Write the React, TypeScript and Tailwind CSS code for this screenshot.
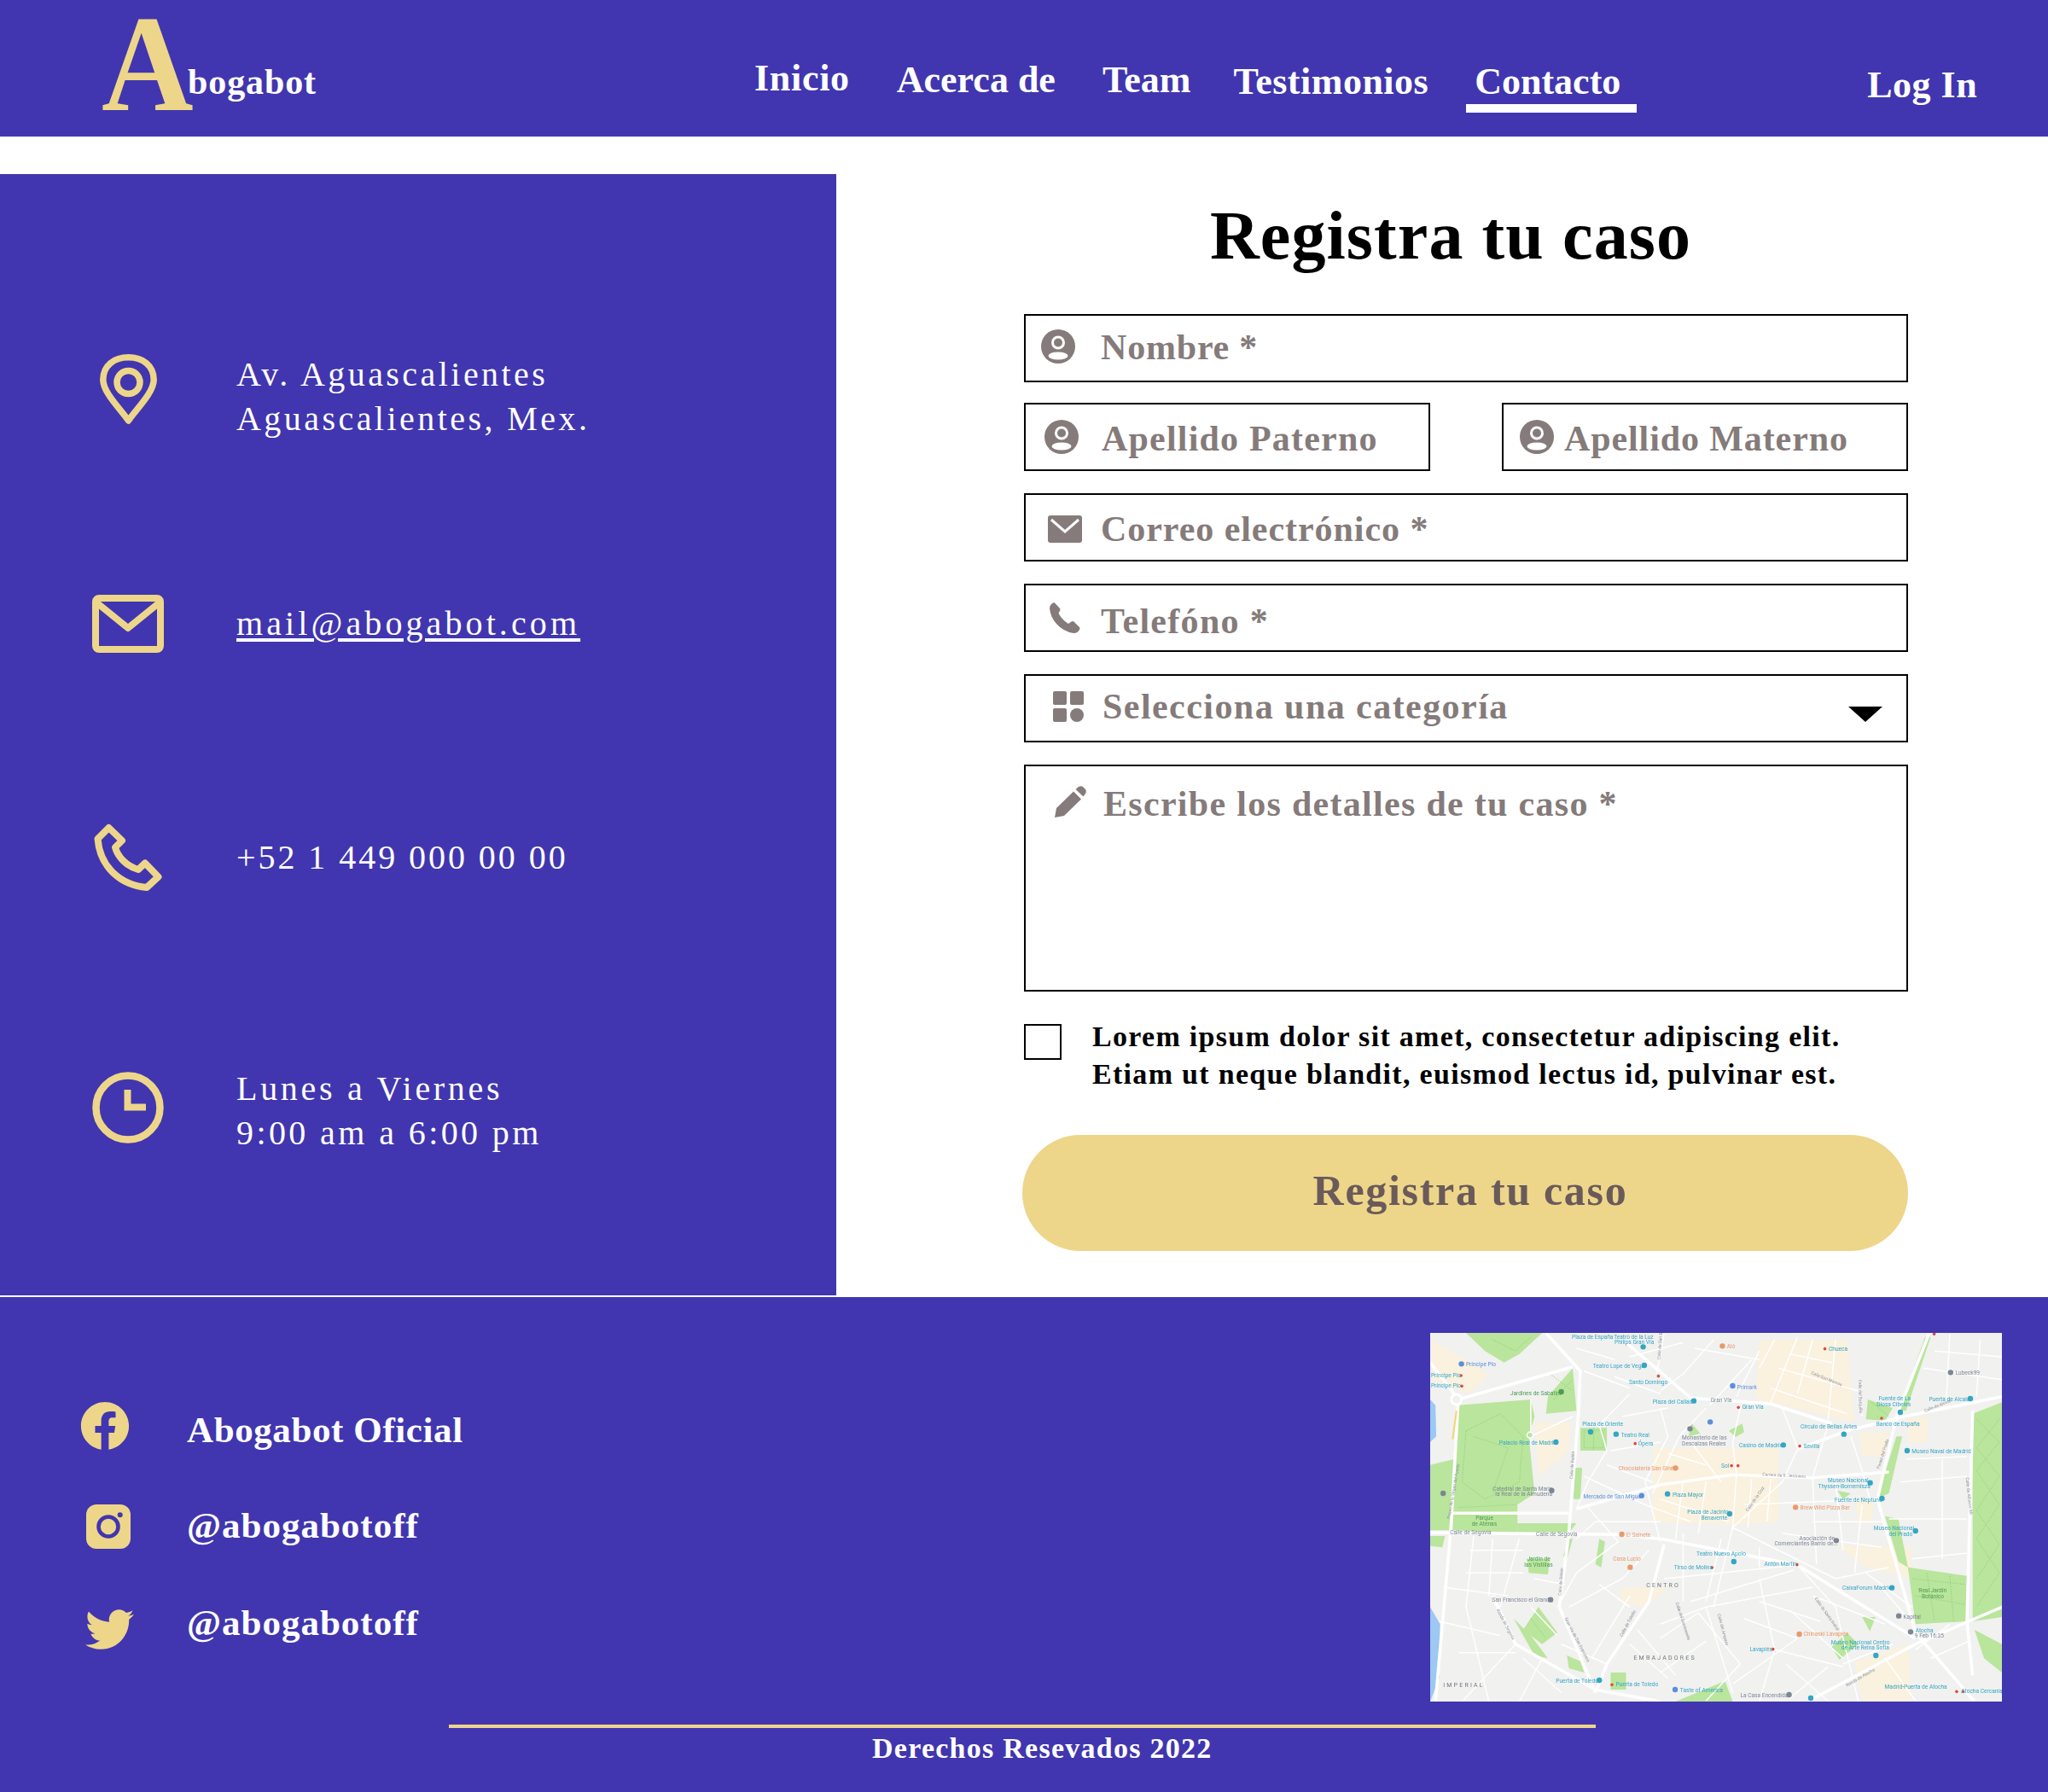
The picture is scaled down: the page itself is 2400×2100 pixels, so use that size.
import { FaFacebook, FaTwitter } from 'react-icons/fa';

const GOLD = '#EDD68A';
const PURPLE = '#4136AF';
const GRAY = '#857B7A';

function UserIcon() {
  return (
    <svg width="40" height="40" viewBox="0 0 40 40">
      <circle cx="20" cy="20" r="20" fill={GRAY} />
      <circle cx="20" cy="15.5" r="6.5" fill={GRAY} stroke="#fff" strokeWidth="3" />
      <ellipse cx="20" cy="31" rx="11.5" ry="4.5" fill="#fff" />
    </svg>
  );
}

function PinIcon() {
  return (
    <svg width="67" height="83" viewBox="0 0 67 83" fill="none" stroke={GOLD} strokeWidth="7.5" strokeLinejoin="round">
      <path d="M33.5 78 C24 64 3.8 45 3.8 30 C3.8 13 17 3.8 33.5 3.8 C50 3.8 63.2 13 63.2 30 C63.2 45 43 64 33.5 78Z" />
      <circle cx="33.5" cy="33" r="13.5" />
    </svg>
  );
}

function MailIcon() {
  return (
    <svg width="84" height="68" viewBox="0 0 84 68" fill="none" stroke={GOLD} strokeWidth="8" strokeLinejoin="round">
      <rect x="4" y="4" width="76" height="60" rx="4" />
      <path d="M5 9 L42 39 L79 9" />
    </svg>
  );
}

function PhoneIcon() {
  return (
    <svg width="80" height="80" viewBox="0 0 80 80" fill="none" stroke={GOLD} strokeWidth="8" strokeLinejoin="round">
      <path d="M17.5 5 L33 20 L25 28 C28 39 38 50 52 54 L60 46.5 L75.5 62.5 L62 75 C30 72 7 50 4.5 18 Z" />
    </svg>
  );
}

function ClockIcon() {
  return (
    <svg width="84" height="84" viewBox="0 0 84 84" fill="none" stroke={GOLD}>
      <circle cx="42" cy="42" r="37.5" strokeWidth="8.5" />
      <path d="M41.5 21 V41.5 H63" strokeWidth="8" />
    </svg>
  );
}

function InstagramIcon() {
  return (
    <svg width="52" height="52" viewBox="0 0 52 52">
      <rect width="52" height="52" rx="12" fill={GOLD} />
      <circle cx="26" cy="26" r="11.5" fill="none" stroke={PURPLE} strokeWidth="4.6" />
      <circle cx="39.7" cy="12.3" r="3" fill={PURPLE} />
    </svg>
  );
}

// map data is in the coordinates of a 1501x1296 tracing, scaled down by pts/X/Y
const X = (v: number) => (v - 36) / 2.24;
const Y = (v: number) => (v - 36) / 3;
const pts = (a: number[]) => {
  const out: string[] = [];
  for (let i = 0; i < a.length; i += 2) out.push(X(a[i]).toFixed(1) + ',' + Y(a[i + 1]).toFixed(1));
  return out.join(' ');
};

const T = '#35a5c4';
const B = '#5b8fd8';
const O = '#e89a6c';
const G = '#7c8794';
const P = '#4f9a55';

const PARKS = [
  [110, 290, 300, 270, 310, 330, 295, 400, 310, 600, 265, 640, 265, 740, 95, 730, 100, 500],
  [130, 36, 330, 36, 270, 110, 230, 140, 180, 100],
  [410, 160, 420, 310, 340, 320, 345, 260],
  [1537, 280, 1537, 1035, 1460, 1050, 1460, 320],
  [1290, 860, 1445, 890, 1445, 1050, 1310, 1060],
  [1335, 50, 1350, 50, 1285, 310, 1265, 310],
  [1260, 400, 1275, 400, 1240, 600, 1208, 620],
  [1230, 680, 1265, 690, 1290, 860, 1265, 840],
  [36, 500, 98, 480, 90, 730, 36, 730],
  [36, 750, 75, 750, 68, 790, 36, 785],
  [280, 1080, 320, 1000, 370, 1090, 330, 1130],
  [430, 370, 500, 370, 500, 450, 430, 450],
  [510, 1230, 550, 1230, 550, 1290, 510, 1290],
  [680, 1332, 810, 1260, 830, 1332],
  [1090, 1140, 1130, 1090, 1160, 1130, 1110, 1185],
  [1465, 1080, 1537, 1130, 1537, 1230, 1490, 1180],
  [1170, 1035, 1205, 1035, 1190, 1085],
  [290, 830, 350, 830, 345, 885, 295, 880],
  [1185, 270, 1250, 300, 1230, 345, 1180, 340],
  [400, 760, 410, 760, 395, 830, 385, 820],
  [480, 760, 495, 770, 485, 860, 470, 850],
  [255, 1040, 300, 1100, 345, 1180, 310, 1170],
  [395, 1170, 430, 1190, 440, 1230, 400, 1215],
  [1105, 590, 1140, 600, 1120, 620],
  [820, 380, 855, 355, 860, 385, 838, 402],
  [720, 350, 745, 390, 715, 400],
  [265, 705, 420, 705, 400, 740, 265, 740],
  [415, 510, 435, 510, 430, 620, 412, 620],
];

const BEIGE = [
  [900, 60, 1130, 60, 1150, 350, 960, 290, 890, 270],
  [620, 440, 950, 440, 950, 700, 830, 710, 620, 700],
  [1160, 385, 1240, 385, 1230, 470, 1170, 470],
  [1290, 340, 1345, 330, 1340, 420, 1290, 420],
  [1150, 630, 1200, 620, 1195, 700, 1160, 700],
  [40, 60, 190, 180, 140, 250, 40, 200],
  [310, 350, 405, 350, 400, 450, 320, 540],
  [1100, 780, 1300, 790, 1300, 900, 1180, 860],
  [535, 930, 660, 930, 600, 1000, 535, 980],
  [1150, 1190, 1290, 1130, 1300, 1332, 1170, 1332],
];

// dotted walks inside the parks
const WALKS = [
  [130, 380, 220, 320, 280, 400, 270, 560, 180, 620, 120, 560, 130, 380],
  [150, 400, 240, 440, 200, 600], [110, 650, 260, 640], [1470, 340, 1530, 420, 1470, 520, 1530, 640, 1470, 760, 1530, 880, 1470, 1000],
  [1530, 340, 1470, 440, 1530, 540, 1470, 660, 1530, 780, 1470, 900], [1300, 900, 1440, 920], [1310, 960, 1440, 990], [1340, 880, 1360, 1050], [1400, 890, 1410, 1050],
  [440, 380, 490, 380, 490, 440, 440, 440, 440, 380], [465, 370, 465, 450], [350, 180, 410, 240], [360, 270, 410, 200],
  [200, 60, 260, 100, 300, 50], [300, 1040, 340, 1110], [1195, 280, 1240, 330],
];

const MAJOR = [
  [340, 36, 430, 170, 425, 320, 400, 740, 375, 1000, 470, 1300],
  [550, 70, 720, 265, 930, 285, 1090, 355],
  [1000, 445, 1130, 380, 1280, 330, 1537, 260],
  [36, 738, 530, 745, 650, 762, 1000, 852, 1310, 1110],
  [1345, 40, 1260, 330, 1210, 620, 1310, 1090, 1465, 1332],
  [1460, 310, 1445, 1050, 1460, 1240],
  [650, 780, 610, 980, 500, 1200, 470, 1300],
  [200, 960, 260, 1130, 470, 1290, 640, 1332],
  [1030, 1330, 1310, 1130, 1537, 1000],
  [110, 270, 410, 155],
  [110, 270, 90, 730, 50, 1332],
  [36, 140, 110, 270],
  [420, 655, 640, 570, 830, 535, 1040, 545, 1240, 525],
  [90, 670, 400, 670],
];

const MINOR = [
  [560, 250, 480, 360, 500, 450, 450, 560, 420, 655], [640, 300, 660, 400, 600, 560, 640, 770],
  [760, 300, 690, 400, 620, 600], [850, 300, 830, 420, 840, 535, 830, 720, 780, 1000], [1000, 445, 960, 560, 830, 720],
  [960, 300, 1000, 440], [1080, 360, 1040, 545, 1050, 850], [1140, 400, 1170, 520, 1190, 620],
  [900, 100, 840, 260], [1000, 50, 930, 280], [1100, 60, 1080, 350], [1160, 200, 1170, 330], [950, 160, 1160, 240], [930, 230, 1130, 320],
  [1360, 100, 1537, 120], [1330, 160, 1537, 200], [1400, 40, 1390, 290], [1480, 60, 1470, 260],
  [1285, 480, 1445, 470], [1270, 560, 1445, 540], [1240, 690, 1445, 690], [1300, 830, 1445, 810], [1380, 480, 1380, 830],
  [650, 40, 630, 180], [780, 60, 700, 180, 640, 240], [880, 130, 770, 290],
  [440, 170, 560, 230], [300, 430, 300, 270], [300, 400, 410, 330],
  [860, 640, 1210, 620], [830, 720, 1100, 900], [1100, 900, 1240, 860], [1000, 852, 1100, 1000, 1160, 1332],
  [650, 900, 1000, 852], [720, 980, 990, 870], [640, 1060, 760, 1000, 1040, 930], [760, 1000, 830, 1300],
  [900, 900, 940, 1150, 900, 1332], [980, 1010, 1120, 1180], [1040, 960, 1230, 1060],
  [530, 770, 420, 880, 370, 1000], [610, 800, 540, 900, 400, 1000], [150, 750, 130, 1000, 190, 1332],
  [270, 760, 220, 1000], [300, 1000, 370, 1100], [260, 1130, 120, 1332], [330, 1180, 270, 1332], [560, 960, 460, 1180],
  [640, 1110, 740, 1020, 850, 1200, 760, 1330], [1000, 1110, 830, 1270], [940, 1150, 1120, 1210], [1220, 930, 1290, 1040],
  [980, 110, 1090, 140], [940, 60, 900, 160], [1040, 60, 1000, 250], [730, 90, 900, 130], [560, 120, 700, 70], [420, 90, 520, 130],
  [520, 190, 640, 250], [540, 330, 660, 300], [510, 450, 640, 420], [660, 460, 760, 500], [720, 420, 800, 560], [500, 500, 620, 560],
  [440, 540, 600, 640, 720, 700], [640, 620, 820, 700], [700, 560, 680, 760], [760, 560, 740, 740], [880, 550, 870, 720], [930, 550, 920, 700],
  [420, 760, 470, 700, 640, 700], [450, 650, 530, 770], [700, 740, 700, 980], [800, 760, 760, 980], [900, 790, 900, 860],
  [1100, 560, 1120, 800], [1170, 640, 1150, 880], [1040, 700, 1230, 700], [960, 740, 1220, 790], [1180, 880, 1300, 1000],
  [1310, 1150, 1400, 1060], [1350, 1180, 1450, 1120], [1230, 1180, 1310, 1330], [1120, 1200, 1250, 1130],
  [580, 1080, 680, 1240], [560, 1130, 660, 1250], [640, 1230, 760, 1120], [860, 1040, 1000, 1110], [900, 980, 1060, 1050],
  [140, 800, 280, 800], [130, 880, 280, 880], [70, 930, 240, 960], [200, 760, 190, 960], [310, 900, 390, 920], [60, 1050, 220, 1100], [110, 1160, 260, 1160],
  [280, 1180, 380, 1300], [380, 1130, 500, 1200], [480, 920, 560, 1000], [970, 1200, 1080, 1330], [1080, 1210, 980, 1320],
];

const LABELS: [number, number, string, string][] = [
  [408, 58, 'Plaza de España', T], [518, 56, 'Teatro de la Luz', T], [520, 74, 'Philips Gran Vía', T],
  [463, 160, 'Teatro Lope de Vega', T], [558, 215, 'Santo Domingo', T], [620, 285, 'Plaza del Callao', T],
  [130, 153, 'Príncipe Pío', B], [38, 192, 'Príncipe Pío', T], [38, 229, 'Príncipe Pío', T],
  [246, 254, 'Jardines de Sabatini', P], [1082, 98, 'Chueca', T], [815, 90, 'Aló', O], [842, 233, 'Primark', B],
  [855, 304, 'Gran Vía', T], [772, 280, 'Gran Vía', G], [1415, 184, 'Lubeck99', G], [1345, 275, 'Puerta de Alcalá', T],
  [1213, 274, 'Fuente de La', T], [1208, 294, 'Diosa Cibeles', T], [1207, 362, 'Banco de España', T],
  [1008, 372, 'Círculo de Bellas Artes', T], [847, 439, 'Casino de Madrid', T], [1016, 440, 'Sevilla', T],
  [1300, 459, 'Museo Naval de Madrid', T], [435, 364, 'Plaza de Oriente', T], [537, 402, 'Teatro Real', T],
  [582, 432, 'Ópera', T], [217, 428, 'Palacio Real de Madrid', T], [697, 412, 'Monasterio de las', G],
  [697, 432, 'Descalzas Reales', G], [800, 509, 'Sol', T], [530, 519, 'Chocolatería San Ginés', O],
  [200, 590, 'Catedral de Santa María', G], [207, 610, 'la Real de la Almudena', G], [438, 617, 'Mercado de San Miguel', B],
  [672, 611, 'Plaza Mayor', T], [1080, 561, 'Museo Nacional', T], [1054, 581, 'Thyssen-Bornemisza', T],
  [1098, 629, 'Fuente de Neptuno', T], [1007, 656, 'Brew Wild Pizza Bar', O], [711, 672, 'Plaza de Jacinto', T],
  [747, 692, 'Benavente', T], [155, 694, 'Parque', P], [145, 714, 'de Atenas', P], [1200, 729, 'Museo Nacional', T],
  [1240, 749, 'del Prado', T], [1005, 764, 'Asociación de', G], [940, 784, 'Comerciantes Barrio de...', G],
  [550, 752, 'El Sainete', O], [88, 745, 'Calle de Segovia', G], [314, 750, 'Calle de Segovia', G],
  [735, 820, 'Teatro Nuevo Apolo', T], [676, 867, 'Tirso de Molina', T], [913, 856, 'Antón Martín', T],
  [516, 838, 'Casa Lucio', O], [290, 838, 'Jardín de', P], [283, 858, 'las Vistillas', P], [1118, 940, 'CaixaForum Madrid', T],
  [1318, 949, 'Real Jardín', P], [1326, 969, 'Botánico', P], [198, 982, 'San Francisco el Grande', G], [1278, 1040, 'Kapital', G],
  [1310, 1089, 'Atocha', T], [1308, 1106, '9 Feb 16:35', G], [1016, 1101, 'Chinaski Lavapiés', O],
  [1088, 1130, 'Museo Nacional Centro', T], [1115, 1150, 'de Arte Reina Sofía', T], [875, 1154, 'Lavapiés', T],
  [366, 1265, 'Puerta de Toledo', T], [523, 1279, 'Puerta de Toledo', T], [692, 1298, 'Taste of America', T],
  [850, 1317, 'La Casa Encendida', G], [1229, 1288, 'Madrid-Puerta de Atocha', T], [1430, 1303, 'Atocha Cercanías', T],
];

// street names that run along a road: x, y, angle, text
const STREETS: [number, number, number, string][] = [
  [410, 550, -86, 'Calle de Bailén'], [88, 690, -80, 'Paseo de la Virgen del Puerto'], [1215, 515, -72, 'Paseo del Prado'],
  [1442, 545, 84, 'Calle de Alfonso XII'], [540, 1105, -62, 'Calle de Toledo'], [1130, 1280, -30, 'Ronda de Atocha'],
  [210, 1010, 62, 'Ronda de Segovia'], [388, 1040, 62, 'Gran Vía de San Francisco'], [1335, 315, -22, 'Calle de Alcalá'],
  [908, 538, 3, 'Carrera de S. Jerónimo'], [870, 665, -55, 'Calle de la Cruz'], [640, 130, -86, 'Calle de San Bernardo'],
  [1035, 180, 22, 'Calle San Marcos'], [1160, 200, 88, 'Calle del Barquillo'], [1045, 970, 55, 'Calle de Santa Isabel'],
  [790, 1025, 75, 'Calle del Amparo'], [680, 985, 72, 'Calle del Sombrerete'], [380, 960, -86, 'Calle de Bailén'],
];

const AREAS: [number, number, string][] = [
  [603, 931, 'CENTRO'],
  [570, 1184, 'EMBAJADORES'],
  [70, 1280, 'IMPERIAL'],
];

const PINS: [number, number, string][] = [
  [595, 85, T], [598, 150, T], [118, 145, B], [380, 243, P], [803, 82, O], [830, 222, B], [728, 275, T], [1402, 175, G],
  [1454, 267, T], [1270, 315, T], [1122, 392, T], [963, 430, T], [1288, 450, T], [457, 384, T], [524, 392, T], [366, 420, T],
  [718, 373, G], [771, 349, B], [680, 511, O], [355, 590, G], [70, 600, G], [591, 608, B], [659, 602, T], [1191, 563, T],
  [1222, 618, T], [995, 649, O], [822, 672, T], [1310, 732, T], [1102, 766, G], [539, 744, O], [833, 840, T], [561, 860, O],
  [1248, 932, T], [352, 974, G], [1266, 1031, G], [1297, 1087, G], [1005, 1095, O], [1206, 1170, T], [480, 1257, T],
  [679, 1290, B], [978, 1308, G], [1035, 1320, T],
];

const METRO = [
  [117, 186], [119, 223], [635, 188], [845, 298], [1221, 336], [574, 425], [1006, 434], [827, 503], [844, 503], [776, 861],
  [999, 851], [936, 1148], [513, 1273], [1418, 1297], [1435, 1297], [1072, 92], [1359, 40],
];

function CityMap() {
  return (
    <svg width="670" height="432" viewBox="0 0 670 432" className="block shrink-0 blur-[0.4px]">
      <rect width="670" height="432" fill="#f1f1f0" />
      {BEIGE.map((p, i) => (
        <polygon key={i} points={pts(p)} fill="#faf1de" />
      ))}
      <polygon points={pts([36, 270, 50, 290, 52, 400, 36, 420])} fill="#9cc8f2" />
      <polygon points={pts([36, 1000, 62, 1060, 60, 1250, 36, 1332])} fill="#9cc8f2" />
      {PARKS.map((p, i) => (
        <polygon key={i} points={pts(p)} fill="#b9e59c" />
      ))}
      {WALKS.map((p, i) => (
        <polyline key={i} points={pts(p)} fill="none" stroke="#8ccd7c" strokeWidth="0.8" strokeDasharray="1.5 1.5" />
      ))}
      {MINOR.map((p, i) => (
        <polyline key={i} points={pts(p)} fill="none" stroke="#fff" strokeWidth="1.5" />
      ))}
      {MAJOR.map((p, i) => (
        <polyline key={i} points={pts(p)} fill="none" stroke="#fff" strokeWidth="3.6" />
      ))}
      <circle cx={X(105)} cy={Y(270)} r="6" fill="#f1f1f0" stroke="#fff" strokeWidth="3" />
      <circle cx={X(298)} cy={Y(395)} r="3.5" fill="#b9e59c" stroke="#fff" strokeWidth="1.6" />
      <polyline points={pts([105, 310, 95, 410])} fill="none" stroke="#f3d56f" strokeWidth="2" />
      {STREETS.map(([x, y, a, text], i) => (
        <text key={i} x={X(x)} y={Y(y)} transform={`rotate(${a} ${X(x)} ${Y(y)})`} fill="#8a9099" fontSize="5" fontFamily="Roboto, sans-serif">
          {text}
        </text>
      ))}
      {PINS.map(([x, y, c], i) => (
        <circle key={i} cx={X(x)} cy={Y(y)} r="3.2" fill={c} />
      ))}
      {METRO.map(([x, y], i) => (
        <circle key={i} cx={X(x)} cy={Y(y)} r="1.8" fill="#e2483d" />
      ))}
      {LABELS.map(([x, y, text, c], i) => (
        <text key={i} x={X(x)} y={Y(y)} fill={c} fontSize="6.6" fontFamily="Roboto, sans-serif">
          {text}
        </text>
      ))}
      {AREAS.map(([x, y, text], i) => (
        <text key={i} x={X(x)} y={Y(y)} fill="#6f7780" fontSize="7" letterSpacing="2.2" fontFamily="Roboto, sans-serif">
          {text}
        </text>
      ))}
    </svg>
  );
}

function InfoRow({ icon, className, children }: { icon: React.ReactNode; className: string; children: React.ReactNode }) {
  return (
    <div className={`flex items-center ${className}`}>
      <div className="flex w-[84px] justify-center">{icon}</div>
      <div className="ml-[85px] text-[40px] leading-[52px] whitespace-nowrap text-white">{children}</div>
    </div>
  );
}

function Field({ className, children }: { className: string; children: React.ReactNode }) {
  return <div className={`flex h-20 items-start border-2 border-black ${className}`}>{children}</div>;
}

const placeholder = 'whitespace-nowrap text-[42px] leading-[50px] font-bold text-[#857B7A]';

export default function App() {
  return (
    <div className="w-[2400px] bg-white font-['Liberation_Serif',serif]">
      {/* Header */}
      <header className="flex h-40 items-start bg-[#4136AF] pl-[119px] font-bold text-white">
        <div className="flex w-[765px] items-start">
          <span className="block w-[101px] origin-left scale-x-[0.92] text-[162px] leading-[150px] text-[#EDD68A]">A</span>
          <span className="mt-[71px] text-[42px] leading-[50px] tracking-[0.9px]">bogabot</span>
        </div>
        <nav className="flex items-start text-[44px] leading-[52px]">
          <a className="mt-[66px] tracking-[0.7px]">Inicio</a>
          <a className="mt-[68px] ml-[55px]">Acerca de</a>
          <a className="mt-[68px] ml-[55px]">Team</a>
          <a className="mt-[70px] ml-[50px] tracking-[0.5px]">Testimonios</a>
          <div className="mt-[69px] ml-11 w-[200px]">
            <a className="mt-px block pl-[10px]">Contacto</a>
            <div className="h-2.5 bg-white" />
          </div>
          <a className="mt-[74px] ml-[270px] tracking-[0.5px]">Log In</a>
        </nav>
      </header>

      <main className="mt-11 flex">
        {/* Contact data */}
        <aside className="h-[1314px] w-[980px] bg-[#4136AF] pt-[209px] pl-[108px]">
          <InfoRow icon={<PinIcon />} className="[&_svg]:mb-[18px]">
            <p className="tracking-[3.45px]">Av. Aguascalientes</p>
            <p className="tracking-[3.45px]">Aguascalientes, Mex.</p>
          </InfoRow>
          <InfoRow icon={<MailIcon />} className="mt-[180px]">
            <span className="tracking-[4.1px] underline underline-offset-4">mail@abogabot.com</span>
          </InfoRow>
          <InfoRow icon={<PhoneIcon />} className="mt-[200px]">
            <span className="tracking-[2.95px]">+52 1 449 000 00 00</span>
          </InfoRow>
          <InfoRow icon={<ClockIcon />} className="mt-[205px] [&_svg]:mb-2">
            <p className="tracking-[3.7px]">Lunes a Viernes</p>
            <p className="tracking-[3.4px]">9:00 am a 6:00 pm</p>
          </InfoRow>
        </aside>

        {/* Form */}
        <form className="ml-[220px] w-[1036px]">
          <h1 className="mt-[27px] pr-9 text-center text-[80px] leading-[90px] font-bold tracking-[1.1px] text-black">
            Registra tu caso
          </h1>
          <Field className="mt-[47px]">
            <div className="mt-4 ml-[18px]"><UserIcon /></div>
            <span className={`mt-3 ml-[30px] tracking-[0.8px] ${placeholder}`}>Nombre *</span>
          </Field>
          <div className="mt-6 flex justify-between">
            <Field className="w-[476px]">
              <div className="mt-[18px] ml-[22px]"><UserIcon /></div>
              <span className={`mt-[15px] ml-[27px] tracking-[1.2px] ${placeholder}`}>Apellido Paterno</span>
            </Field>
            <Field className="w-[476px]">
              <div className="mt-[18px] ml-[19px]"><UserIcon /></div>
              <span className={`mt-[15px] ml-3 tracking-[0.9px] ${placeholder}`}>Apellido Materno</span>
            </Field>
          </div>
          <Field className="mt-[26px]">
            <svg width="40" height="32" viewBox="0 0 40 32" className="mt-6 ml-[26px] shrink-0">
              <rect width="40" height="32" rx="3" fill={GRAY} />
              <path d="M4 5 L20 19 L36 5" fill="none" stroke="#fff" strokeWidth="3" />
            </svg>
            <span className={`mt-[15px] ml-[22px] tracking-[0.95px] ${placeholder}`}>Correo electrónico *</span>
          </Field>
          <Field className="mt-[26px]">
            <svg width="36" height="36" viewBox="0 0 36 36" className="mt-5 ml-7 shrink-0" fill={GRAY}>
              <path d="M6 0.5 L12 7 Q13 8.5 12 10 L10.5 12.5 Q14 20 22 25 L25.5 22.5 Q27 21.5 28.5 22.5 L35 29 Q36 30.5 35 32 L33 34.5 Q31 36 28 36 Q16 34 8 25 Q1 17 0 7 Q0 3.5 3 1 Q5 0 6 0.5 Z" />
            </svg>
            <span className={`mt-[17px] ml-6 tracking-[1.3px] ${placeholder}`}>Telefóno *</span>
          </Field>
          <Field className="mt-[26px]">
            <svg width="36" height="36" viewBox="0 0 36 36" className="mt-[18px] ml-8 shrink-0" fill={GRAY}>
              <rect width="16" height="16" rx="2" />
              <rect x="20" width="16" height="16" rx="2" />
              <rect y="20" width="16" height="16" rx="2" />
              <circle cx="28" cy="28" r="8" />
            </svg>
            <span className={`mt-[11px] ml-[22px] tracking-[1.45px] ${placeholder}`}>Selecciona una categoría</span>
            <svg width="40" height="18" viewBox="0 0 40 18" className="mt-9 mr-7 ml-auto shrink-0">
              <polygon points="0,0 40,0 20,18" fill="#000" />
            </svg>
          </Field>
          <div className="mt-[26px] flex h-[266px] items-start border-2 border-black">
            <svg width="37" height="37" viewBox="0 0 37 37" className="mt-[23px] ml-[34px] shrink-0" fill={GRAY}>
              <path d="M0 37 L2 26 L22 6.5 L31 15.5 L11 35 Z" />
              <path d="M24.5 4 L28 1 Q30.5 -0.5 33 1 L36 4 Q37.5 6.5 36 9 L33.5 12.5 Z" />
            </svg>
            <span className={`mt-[19px] ml-5 tracking-[1.3px] ${placeholder}`}>Escribe los detalles de tu caso *</span>
          </div>
          <div className="mt-[31px] flex items-start">
            <div className="mt-[7px] h-[42px] w-11 shrink-0 border-2 border-black" />
            <p className="ml-9 text-[34px] leading-11 font-bold tracking-[1.3px] whitespace-nowrap text-black">
              Lorem ipsum dolor sit amet, consectetur adipiscing elit.
              <br />
              Etiam ut neque blandit, euismod lectus id, pulvinar est.
            </p>
          </div>
          <button
            type="button"
            className="mt-[49px] -ml-0.5 h-[136px] w-[1038px] rounded-[68px] bg-[#EDD68A] pb-1.5 pl-3 text-[50px] font-bold tracking-[1.7px] text-[#6A5A5A]"
          >
            Registra tu caso
          </button>
        </form>
      </main>

      {/* Footer */}
      <footer className="mt-0.5 h-[580px] bg-[#4136AF]">
        <div className="flex items-start justify-between pt-[42px] pr-[54px] pl-[94px]">
          <div className="mt-20 text-[43px] leading-[58px] font-bold text-white">
            <div className="flex h-[58px] items-center">
              <div className="w-[125px]"><FaFacebook size={58} color={GOLD} /></div>
              <span className="mt-[9px] tracking-[0.6px]">Abogabot Oficial</span>
            </div>
            <div className="mt-[60px] flex h-[58px] items-center">
              <div className="w-[125px] pl-[7px]"><InstagramIcon /></div>
              <span className="mb-[3px] tracking-[1px]">@abogabotoff</span>
            </div>
            <div className="mt-[62px] flex h-[58px] items-center">
              <div className="w-[125px] pl-1.5"><FaTwitter size={57} color={GOLD} /></div>
              <span className="mb-3.5 tracking-[1px]">@abogabotoff</span>
            </div>
          </div>
          <CityMap />
        </div>
        <div className="mt-[27px] ml-[526px] h-1 w-[1344px] bg-[#EDD68A]" />
        <p className="mt-1 ml-[1022px] text-[34px] leading-10 font-bold tracking-[1.26px] whitespace-nowrap text-white">
          Derechos Resevados 2022
        </p>
      </footer>
    </div>
  );
}
